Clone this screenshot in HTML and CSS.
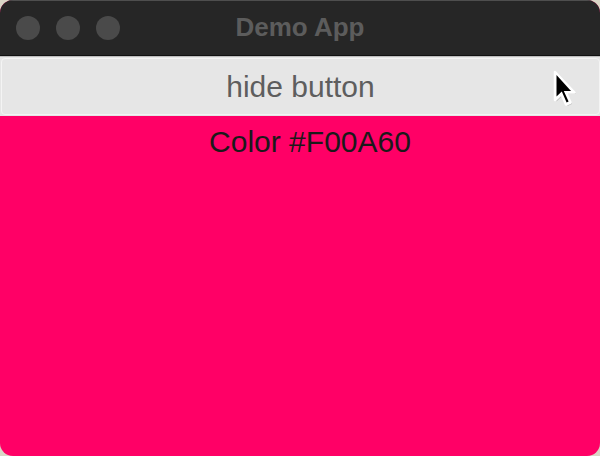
FILE: index.html
```html
<!DOCTYPE html>
<html>
<head>
<meta charset="utf-8">
<link rel="stylesheet" href="styles.css">
</head>
<body>
<div class="window">
  <div class="titlebar">
    <div class="lights">
      <span class="light"></span>
      <span class="light"></span>
      <span class="light"></span>
    </div>
    <div class="title">Demo App</div>
  </div>
  <div class="toolbar">
    <button class="hide-btn">hide button</button>
  </div>
  <div class="content">
    <div class="label">Color #F00A60</div>
  </div>
  <svg class="cursor" width="24" height="38" viewBox="0 0 24 38">
    <path d="M2 2 L2 30 L8.5 24 L13 34.5 L17.5 32.5 L13 22.5 L21.5 22.5 Z" fill="#000" opacity="0.18" transform="translate(1.5,1.5)"/>
    <path d="M2 2 L2 30 L8.5 24 L13 34.5 L17.5 32.5 L13 22.5 L21.5 22.5 Z" fill="#fff" stroke="#fff" stroke-width="2.5" stroke-linejoin="round"/>
    <path d="M3.5 5 L3.5 26.5 L8.8 21.6 L13.6 32.4 L15.6 31.5 L10.8 21 L18 21 Z" fill="#000"/>
  </svg>
</div>
</body>
</html>
```
FILE: styles.css
```css
html, body {
  margin: 0;
  padding: 0;
}
body {
  background: #d9d5c6;
  width: 600px;
  height: 456px;
  overflow: hidden;
  font-family: "Liberation Sans", Arial, sans-serif;
}
.window {
  position: relative;
  width: 600px;
  height: 456px;
  border-radius: 13px;
  overflow: hidden;
  display: flex;
  flex-direction: column;
  background: #ff0066;
}
.titlebar {
  flex: none;
  background: #262626;
  border-top: 1px solid #4e4e4e;
  box-sizing: border-box;
  height: 56px;
  display: flex;
  align-items: center;
  position: relative;
  border-bottom: 1px solid #111;
}
.lights {
  display: flex;
  gap: 16px;
  padding-left: 16px;
}
.light {
  width: 24px;
  height: 24px;
  border-radius: 50%;
  background: #4a4a4a;
}
.title {
  position: absolute;
  left: 0;
  right: 0;
  top: 9px;
  text-align: center;
  color: #5c5c5c;
  font-weight: bold;
  font-size: 26px;
  line-height: 34px;
}
.toolbar {
  flex: none;
  height: 60px;
  box-sizing: border-box;
  border-top: 1px solid #bdbdbd;
  background: #e6e6e6;
  display: flex;
}
.hide-btn {
  flex: 1;
  margin: 1px 0 1px 1px;
  border: 1px solid #f4f4f4;
  border-radius: 4px;
  background: #e6e6e6;
  font-family: "Liberation Sans", Arial, sans-serif;
  font-size: 30px;
  color: #5e5e5e;
  padding: 0;
}
.content {
  flex: 1;
  display: flex;
  justify-content: center;
  padding-top: 9px;
  padding-left: 20px;
}
.label {
  font-size: 30px;
  line-height: 34px;
  color: #1a1a1a;
}
.cursor {
  position: absolute;
  left: 553px;
  top: 70px;
}
```
